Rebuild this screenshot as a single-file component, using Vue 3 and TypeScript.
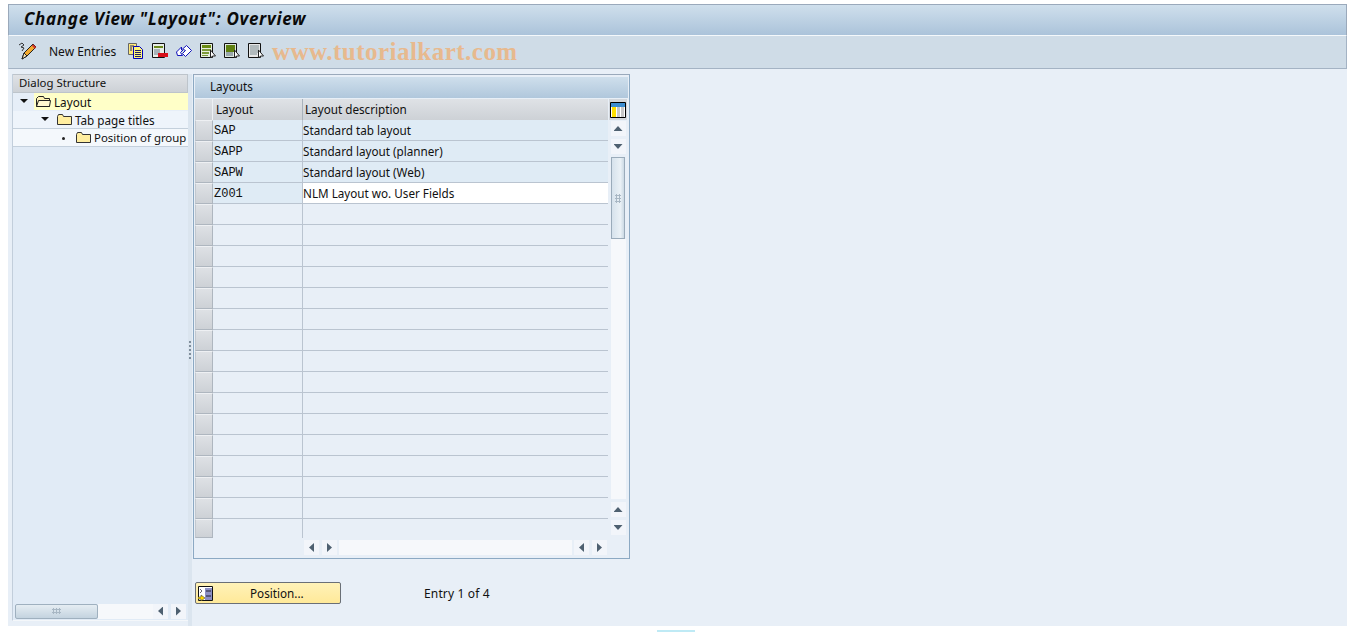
<script setup lang="ts">
const rows = Array.from({ length: 20 }, (_, i) => {
  const data = [
    ['SAP', 'Standard tab layout'],
    ['SAPP', 'Standard layout (planner)'],
    ['SAPW', 'Standard layout (Web)'],
    ['Z001', 'NLM Layout wo. User Fields'],
  ][i]
  return { key: data ? data[0] : '', text: data ? data[1] : '', filled: !!data, white: i === 3 }
})
const tree = [
  { label: 'Layout', indent: 5, cls: 'sel', mark: 'down', open: true },
  { label: 'Tab page titles', indent: 26, cls: 'alt', mark: 'down', open: false },
  { label: 'Position of group', indent: 45, cls: 'plain', mark: 'dot', open: false },
]
</script>

<template>
  <div class="page">
    <div class="frame">
      <header class="title"><h1>Change View "Layout": Overview</h1></header>
      <div class="toolbar">
        <svg class="pencil" width="20" height="18" viewBox="0 0 20 18">
          <path d="M1 3l3-2 2 2-3 2 3 1-2 3" stroke="#333" fill="none" />
          <path d="M4 17l2-6L15 2l3 3-9 9z" fill="#f2a92e" stroke="#222" />
          <path d="M4 17l2-6 3 3z" fill="#f8e3b0" stroke="#222" />
          <path d="M14.500 3l3 3" stroke="#d0342a" stroke-width="2" />
        </svg>
        <span class="tool-text">New Entries</span>
        <div class="icons">
          <svg width="16" height="16" viewBox="0 0 16 16">
            <path d="M.5 .5h8v11h-8z" fill="#ffe97a" stroke="#666" />
            <path d="M5.500 3.500h6l3 3v9h-9z" fill="#fff47a" stroke="#00b" />
            <path d="M7 7.500h6M7 9.500h6M7 11.500h6M7 13.500h6M2 3h4M2 5h2M2 7h2" stroke="#226" />
          </svg>
          <svg width="16" height="16" viewBox="0 0 16 16">
            <path d="M.5 .5h12v14H.5z" fill="#e8eee8" stroke="#111" />
            <path d="M2 3h9v2H2z" fill="#6d8a1e" />
            <path d="M2 7h6M2 9h6M2 11h4" stroke="#678" />
            <path d="M6 10h10v4H6z" fill="#d8101a" />
          </svg>
          <svg width="16" height="15" viewBox="0 0 16 15">
            <path d="M.5 8l5-5v3l5-4.500 5 5-6 6-3-3 3-3-2-1-3 3 2 3h-5z" fill="#fff" stroke="#11b" />
          </svg>
          <svg width="16" height="16" viewBox="0 0 16 16">
            <path d="M.5 .5h12v14H.5z" fill="#e8eee0" stroke="#111" />
            <path d="M2 2h9v3H2z" fill="#6b8c12" />
            <path d="M2 6h9v2H2zM2 9h7v2H2zM2 12h6v1H2z" fill="#7d9a38" />
            <path d="M10.500 7v8l2-2h3z" fill="#fff" stroke="#222" />
          </svg>
          <svg width="16" height="16" viewBox="0 0 16 16">
            <path d="M.5 .5h12v14H.5z" fill="#dfe8e0" stroke="#111" />
            <path d="M2 2h9v7H2z" fill="#5f800f" />
            <path d="M2 10h7M2 12h7" stroke="#567" />
            <path d="M10.500 7v8l2-2h3z" fill="#fff" stroke="#222" />
          </svg>
          <svg width="16" height="16" viewBox="0 0 16 16">
            <path d="M.5 .5h12v14H.5z" fill="#e8e8e8" stroke="#111" />
            <path d="M2 3h9M2 5h9M2 7h9M2 9h8M2 11h7" stroke="#7d8d92" />
            <path d="M10.500 7v8l2-2h3z" fill="#fff" stroke="#222" />
          </svg>
        </div>
      </div>
      <span class="watermark">www.tutorialkart.com</span>

      <main class="content">
        <aside class="tree">
          <div class="tree-head">Dialog Structure</div>
          <div v-for="n in tree" :key="n.label" class="tree-row" :class="n.cls">
            <span class="tree-lead" :style="{ width: n.indent + 'px' }"></span>
            <span class="mark" :class="n.mark"></span>
            <div class="tree-item">
              <svg width="18" height="13" viewBox="0 0 18 13">
                <path v-if="n.open" d="M2.500 11.500v-8l2-2h5l1 2h5v8z" fill="#fff3b5" stroke="#222" />
                <path v-if="n.open" d="M2.500 11.500l2-6h12l-1 6z" fill="#fff8d0" stroke="#222" />
                <path v-else d="M2.500 11.500v-8l1-2h4l1 2h8v8z" fill="#ffeea0" stroke="#333" />
              </svg>
              <span>{{ n.label }}</span>
            </div>
          </div>
          <div class="tree-fill"></div>
          <div class="tree-scroll">
            <div class="tree-thumb"><span class="grip-h"></span></div>
            <div class="tree-track"></div>
            <button class="arrow-btn"><span class="tri left"></span></button>
            <button class="arrow-btn"><span class="tri right"></span></button>
          </div>
        </aside>
        <div class="sash"><span></span></div>

        <section class="main-col">
          <div class="table-box">
            <div class="table-title">Layouts</div>
            <div class="table-main">
              <div class="table-cols">
                <div class="thead">
                  <div class="corner"></div>
                  <div class="th c1">Layout</div>
                  <div class="th c2">Layout description</div>
                </div>
                <div v-for="(r, i) in rows" :key="i" class="tr" :class="{ last: i === 19 }">
                  <div class="selector"></div>
                  <div class="td c1" :class="{ filled: r.filled }">{{ r.key }}</div>
                  <div class="td c2" :class="{ filled: r.filled, white: r.white }">{{ r.text }}</div>
                </div>
              </div>
              <div class="vscroll">
                <div class="config">
                  <svg width="16" height="16" viewBox="0 0 16 16">
                    <path d="M.5 .5h15v15H.5z" fill="#fff" stroke="#000" />
                    <path d="M1 1h14v4H1z" fill="#3d8dd0" />
                    <path d="M2 5h4v10H2z" fill="#ffe000" />
                    <path d="M7 5h3v10H7zM11 5h3v10h-3z" fill="#c8c8c8" />
                  </svg>
                </div>
                <button class="arrow-btn v"><span class="tri up"></span></button>
                <button class="arrow-btn v"><span class="tri down"></span></button>
                <div class="vthumb"><span class="grip-v"></span></div>
                <div class="vtrack"></div>
                <button class="arrow-btn v"><span class="tri up"></span></button>
                <button class="arrow-btn v"><span class="tri down"></span></button>
              </div>
            </div>
            <div class="hscroll">
              <button class="arrow-btn"><span class="tri left"></span></button>
              <button class="arrow-btn"><span class="tri right"></span></button>
              <div class="htrack"></div>
              <button class="arrow-btn"><span class="tri left"></span></button>
              <button class="arrow-btn"><span class="tri right"></span></button>
            </div>
          </div>

          <div class="actions">
            <button class="position">
              <svg width="15" height="15" viewBox="0 0 15 15">
                <path d="M.5 .5h14v14H.5z" fill="#fff" stroke="#111" />
                <path d="M7 2h7v12H7z" fill="#8c8fc4" />
                <path d="M8 5h5M8 10h5" stroke="#223" />
                <path d="M2 3l2 2-2 2" stroke="#667" fill="none" />
                <path d="M0 11h3V9l4 3-4 3v-2H0z" fill="#ffd800" stroke="#443" stroke-width=".6" />
              </svg>
              <span>Position...</span>
            </button>
            <span class="entry">Entry 1 of 4</span>
          </div>
        </section>
      </main>
    </div>
    <span class="cyan"></span>
  </div>
</template>

<style>
html, body { margin: 0; background: #fff; overflow: hidden; }
</style>

<style scoped>
.page {
  position: relative;
  width: 1358px;
  height: 632px;
  box-sizing: border-box;
  padding: 4px 11px 6px 8px;
  background: #fff;
  font-family: "Noto Sans", "DejaVu Sans", sans-serif;
  font-size: 11.7px;
  color: #111;
  overflow: hidden;
}
.frame {
  position: relative;
  height: 100%;
  display: flex;
  flex-direction: column;
  background: #e8eff7;
}
.title {
  height: 32px;
  box-sizing: border-box;
  border: 1px solid #9aa9bb;
  border-bottom: 1px solid #f4f8fb;
  background: linear-gradient(#cfdfec, #abc3da);
  padding: 0 0 4px 15px;
  display: flex;
  align-items: center;
}
.title h1 {
  margin: 0;
  font: italic 700 17px "Noto Sans", sans-serif;
  letter-spacing: .7px;
  color: #0a0a0a;
}
.toolbar {
  height: 33px;
  box-sizing: border-box;
  background: #cfdce7;
  border: 1px solid #a4b3c4;
  border-top: 0;
  border-left-color: #c5d2de;
  display: flex;
  align-items: center;
  padding: 0 0 2px 9px;
}
.pencil { margin-right: 11px; flex: none; }
.tool-text { width: 79px; font-size: 12px; }
.icons { display: flex; align-items: center; gap: 8px; }
.watermark {
  position: absolute;
  left: 264px;
  top: 34px;
  font: 700 25px "Liberation Serif", serif;
  letter-spacing: .48px;
  color: #e7b98e;
}
.content { flex: 1; min-height: 0; display: flex; padding: 5px 0 0 4px; }
.tree {
  width: 176px;
  display: flex;
  flex-direction: column;
  background: #e1ebf6;
  border-left: 1px solid #c2cedb;
  border-bottom: 1px solid #f4f7fa;
  box-sizing: border-box;
  margin-bottom: 5px;
}
.tree-head {
  padding-left: 6px;
  border: 1px solid #bdc4cb;
  border-left: 0;
  background: linear-gradient(#dfe2e6, #cdd1d6);
  height: 17px;
  line-height: 15px;
  font-size: 11.4px;
}
.tree-row {
  height: 18px;
  display: flex;
  align-items: center;
  border-bottom: 1px solid #c4d0dc;
  box-sizing: border-box;
}
.tree-row.sel { background: #e6eef8; border-bottom-color: #e6eef8; }
.tree-row.alt { background: #eef4fb; }
.tree-row.plain { background: #f4f8fc; font-size: 11.4px; }
.tree-lead { flex: none; }
.mark { flex: none; width: 16px; height: 8px; position: relative; }
.mark.down::before {
  content: "";
  position: absolute;
  left: 2px;
  top: 1px;
  border-left: 4px solid transparent;
  border-right: 4px solid transparent;
  border-top: 4px solid #111;
}
.mark.dot::before {
  content: "";
  position: absolute;
  left: 4px;
  top: 3px;
  width: 3px;
  height: 3px;
  background: #222;
  border-radius: 50%;
}
.tree-item { display: flex; align-items: center; gap: 2px; flex: 1; height: 100%; white-space: nowrap; overflow: hidden; }
.tree-item svg { flex: none; }
.sel .tree-item { background: #ffffc8; }
.tree-fill { flex: 1; }
.tree-scroll { height: 16px; display: flex; align-items: center; padding: 0 2px 1px 2px; }
.tree-thumb {
  width: 83px;
  height: 15px;
  box-sizing: border-box;
  border: 1px solid #9fb0bf;
  border-radius: 2px;
  background: linear-gradient(#e5edf3, #c4d3df);
  display: flex;
  align-items: center;
  justify-content: center;
}
.grip-h, .grip-v { background: radial-gradient(circle, #a8b7c4 1px, transparent 1.1px) 0 0 / 3px 3px; }
.grip-h { width: 9px; height: 6px; }
.grip-v { width: 6px; height: 9px; }
.tree-track { flex: 1; height: 15px; background: #f6f8fb; }
.arrow-btn {
  width: 15px;
  height: 15px;
  padding: 0;
  border: 0;
  background: #f2f5fa;
  display: flex;
  align-items: center;
  justify-content: center;
  flex: none;
}
.tree-scroll .arrow-btn + .arrow-btn { margin-left: 3px; }
.tri { display: block; background: #4e6070; }
.tri.left { width: 5px; height: 9px; clip-path: polygon(100% 0, 100% 100%, 0 50%); }
.tri.right { width: 5px; height: 9px; clip-path: polygon(0 0, 100% 50%, 0 100%); }
.tri.up { width: 9px; height: 5px; clip-path: polygon(50% 0, 100% 100%, 0 100%); }
.tri.down { width: 9px; height: 5px; clip-path: polygon(0 0, 100% 0, 50% 100%); }
.sash { width: 4px; background: #dbe5ef; display: flex; align-items: center; justify-content: center; }
.sash span { width: 2px; height: 18px; background: repeating-linear-gradient(#7f8e9c 0 2px, transparent 2px 4px); }
.main-col { flex: 1; padding: 0 0 0 1px; }
.table-box {
  width: 437px;
  height: 485px;
  box-sizing: border-box;
  border: 1px solid #8ca9c3;
  border-top-color: #9aa9bb;
  padding: 2px 1px 0 1px;
  display: flex;
  flex-direction: column;
}
.table-title {
  height: 21px;
  line-height: 19px;
  padding-left: 15px;
  background: linear-gradient(#cfdfec, #b0c7dc);
  margin-bottom: 1px;
  flex: none;
}
.table-main { display: flex; flex: none; }
.table-cols { width: 413px; }
.thead { height: 21px; display: flex; }
.corner { width: 18px; background: linear-gradient(#dfe2e6, #cdd1d6); border-right: 1px solid #eef1f4; box-sizing: border-box; }
.th {
  height: 21px;
  line-height: 21px;
  padding-left: 3px;
  box-sizing: border-box;
  background: linear-gradient(#dfe2e6, #cdd1d6);
  border-right: 1px solid #a9b2bb;
}
.c1 { width: 90px; flex: none; }
.c2 { width: 305px; flex: none; }
.th.c2 { border-right: 0; padding-left: 2px; }
.tr { height: 21px; display: flex; }
.tr.last { height: 19px; }
.selector {
  width: 18px;
  flex: none;
  box-sizing: border-box;
  border: 1px solid #aeb6bf;
  border-left-color: #c2c8cf;
  border-top-color: #eef0f3;
  background: linear-gradient(#dee1e5, #cdd1d6);
}
.td {
  box-sizing: border-box;
  border-bottom: 1px solid #bac4d0;
  line-height: 21px;
  padding-left: 1px;
  overflow: hidden;
  white-space: nowrap;
}
.td.c2 { padding-left: 0; }
.last .td { border-bottom: 0; }
.td.c1 { border-right: 1px solid #bac4d0; font: 12px/23px "Liberation Mono", monospace; }
.td.filled { background: #dfebf5; }
.td.white { background: #fff; }
.vscroll { width: 18px; display: flex; flex-direction: column; align-items: center; padding-left: 1px; }
.config {
  height: 21px;
  width: 18px;
  display: flex;
  align-items: center;
  justify-content: center;
  background: #d3d7dc;
  margin-bottom: 1px;
  flex: none;
}
.arrow-btn.v { margin-bottom: 3px; }
.vthumb {
  width: 14px;
  height: 82px;
  box-sizing: border-box;
  border: 1px solid #9aabba;
  background: linear-gradient(90deg, #d6e2ec, #eaf1f6 70%, #cbd9e4);
  display: flex;
  align-items: center;
  justify-content: center;
  flex: none;
}
.vtrack { width: 15px; flex: 1; background: #f6f8fb; margin-bottom: 3px; }
.hscroll { height: 16px; display: flex; gap: 3px; padding: 2px 0 0 109px; }
.htrack { width: 233px; height: 15px; background: #f6f8fb; margin: 0 -1px; }
.actions { display: flex; align-items: center; padding: 23px 0 0 2px; }
.position {
  width: 146px;
  height: 22px;
  padding: 0 0 0 2px;
  box-sizing: border-box;
  border: 1px solid #6a6f76;
  border-radius: 2px;
  background: linear-gradient(#fff2b8, #ffe999);
  display: flex;
  align-items: center;
  font: inherit;
  color: #111;
}
.position span { margin-left: 37px; }
.entry { margin-left: 83px; font-size: 12px; letter-spacing: .15px; }
.cyan { position: absolute; left: 657px; top: 630px; width: 38px; height: 2px; background: #bfeaf5; }
</style>
